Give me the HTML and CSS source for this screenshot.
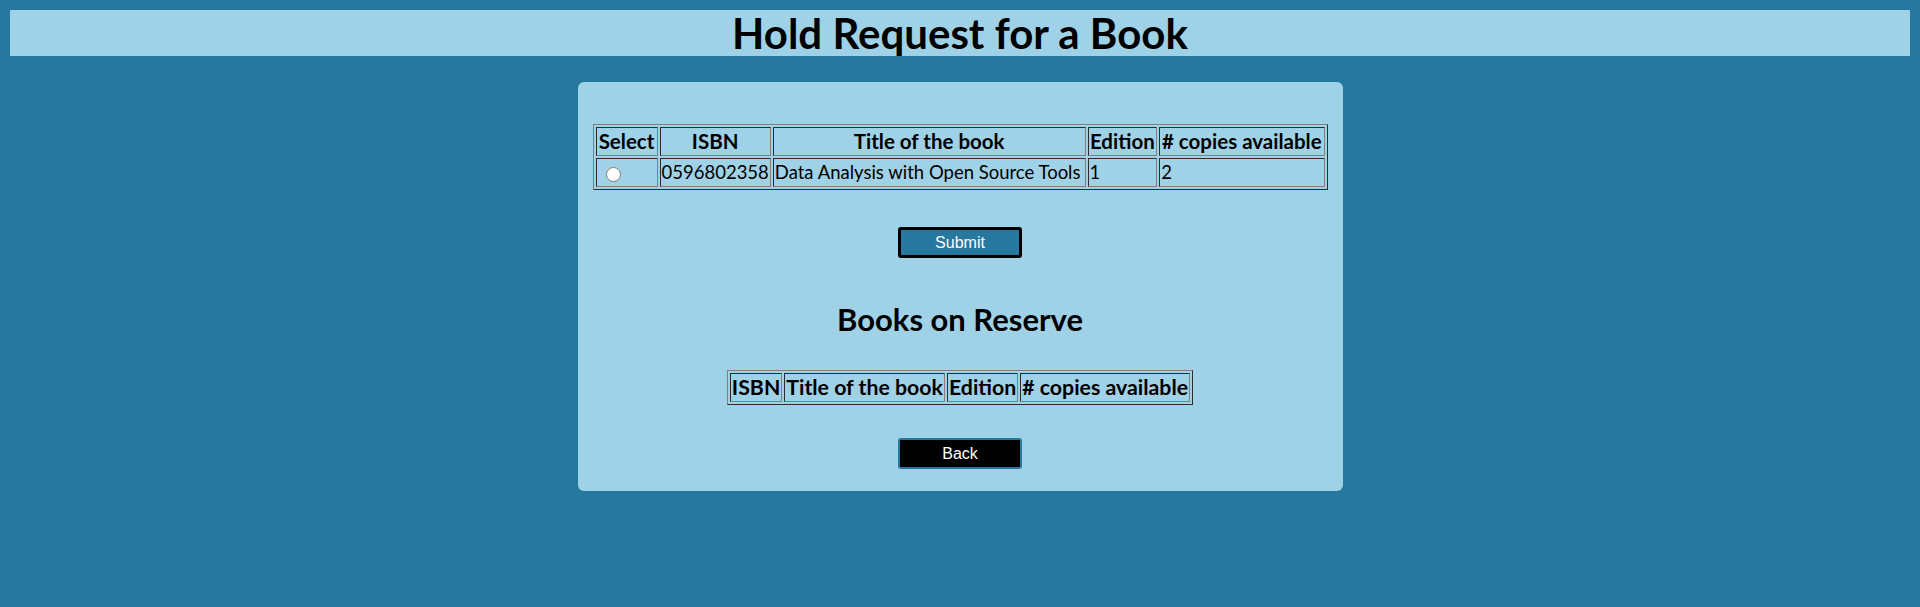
FILE: index.html
```html
<!DOCTYPE html>
<html>
<head>
<meta charset="utf-8">
<title>Hold Request for a Book</title>
<link rel="stylesheet" href="styles.css">
</head>
<body>
<h1 class="page-title">Hold Request for a Book</h1>
<div class="card">
  <table class="grid grid-books" border="1">
    <tr>
      <th class="c-select">Select</th>
      <th class="c-isbn">ISBN</th>
      <th class="c-title">Title of the book</th>
      <th class="c-edition">Edition</th>
      <th class="c-copies"># copies available</th>
    </tr>
    <tr>
      <td><input type="radio" name="book" class="pick"></td>
      <td>0596802358</td>
      <td>Data Analysis with Open Source Tools</td>
      <td>1</td>
      <td>2</td>
    </tr>
  </table>
  <button class="btn btn-submit" type="button">Submit</button>
  <h2 class="section-title">Books on Reserve</h2>
  <table class="grid grid-reserve" border="1">
    <tr>
      <th>ISBN</th>
      <th>Title of the book</th>
      <th>Edition</th>
      <th># copies available</th>
    </tr>
  </table>
  <button class="btn btn-back" type="button">Back</button>
</div>
</body>
</html>
```
FILE: styles.css
```css
html, body {
  margin: 0;
  padding: 0;
}
body {
  background: #27789f;
  padding: 10px;
  font-family: "Lato", "Open Sans", sans-serif;
  color: #000;
}
.page-title {
  margin: 0;
  background: #9fd2e6;
  text-align: center;
  font-size: 42px;
  line-height: 46px;
  height: 46px;
  font-weight: bold;
}
.card {
  width: 735px;
  margin: 26px auto 0;
  background: #9fd2e6;
  border-radius: 6px;
  padding: 42px 15px 22px;
  display: flex;
  flex-direction: column;
  align-items: center;
}
.grid {
  border: 1px outset grey;
  border-spacing: 2px;
  font-size: 18.5px;
}
.grid th, .grid td {
  border: 1px inset grey;
  padding: 1px;
  height: 25px;
  line-height: 25px;
  white-space: nowrap;
}
.grid th {
  font-size: 20.5px;
  font-weight: bold;
  text-align: center;
}
.grid-reserve th {
  font-size: 21.3px;
}
.grid td {
  text-align: left;
}
.c-select { width: 59px; }
.c-isbn { width: 100px; }
.c-title { width: 310px; }
.c-edition { width: 66px; }
.c-copies { width: 162px; }
.pick {
  margin: 0 0 0 8px;
  width: 15px;
  height: 15px;
  vertical-align: middle;
}
.btn {
  width: 124px;
  height: 31px;
  font-family: "Liberation Sans", Arial, sans-serif;
  font-size: 16px;
  color: #fff;
  border-radius: 3px;
  padding: 0;
}
.btn-submit {
  margin-top: 37px;
  background: #27789f;
  border: 3px solid #000;
}
.btn-back {
  margin-top: 33px;
  background: #000;
  border: 2px solid #27789f;
}
.section-title {
  margin: 43px 0 0;
  font-size: 31px;
  line-height: 36px;
  font-weight: bold;
}
.grid-reserve {
  margin-top: 33px;
}
```
